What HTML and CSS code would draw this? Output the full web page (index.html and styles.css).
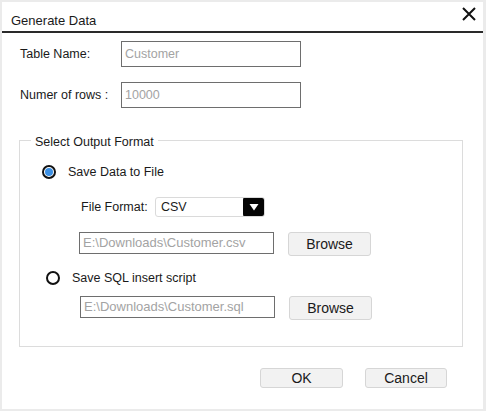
FILE: index.html
```html
<!DOCTYPE html>
<html>
<head>
<meta charset="utf-8">
<link rel="stylesheet" href="styles.css">
</head>
<body>
<div class="dialog">
  <div class="titlebar">
    <span class="title">Generate Data</span>
    <svg class="close" width="14" height="14" viewBox="0 0 14 14"><path d="M1 1 L13 13 M13 1 L1 13" stroke="#111" stroke-width="2" fill="none"/></svg>
  </div>
  <div class="form">
    <div class="row first">
      <span class="label">Table Name:</span>
      <div class="textbox">Customer</div>
    </div>
    <div class="row second">
      <span class="label">Numer of rows :</span>
      <div class="textbox">10000</div>
    </div>
    <div class="group">
      <span class="legend">Select Output Format</span>
      <div class="option opt1">
        <svg class="radio" width="14" height="14" viewBox="0 0 14 14"><circle cx="7" cy="7" r="6" stroke="#111" stroke-width="2" fill="#fff"/><circle cx="7" cy="7" r="4" fill="#3b8fe3"/></svg>
        <span>Save Data to File</span>
      </div>
      <div class="format-row">
        <span class="flabel">File Format:</span>
        <div class="select">
          <span class="select-val">CSV</span>
          <span class="arrow"><svg width="10" height="8" viewBox="0 0 10 8"><path d="M0.5 1 L9.5 1 L5 7.5 Z" fill="#fff"/></svg></span>
        </div>
      </div>
      <div class="path-row p1">
        <div class="pathbox">E:\Downloads\Customer.csv</div>
        <div class="btn browse">Browse</div>
      </div>
      <div class="option opt2">
        <svg class="radio" width="14" height="14" viewBox="0 0 14 14"><circle cx="7" cy="7" r="6" stroke="#111" stroke-width="2" fill="#fff"/></svg>
        <span>Save SQL insert script</span>
      </div>
      <div class="path-row p2">
        <div class="pathbox">E:\Downloads\Customer.sql</div>
        <div class="btn browse">Browse</div>
      </div>
    </div>
    <div class="footer">
      <div class="btn action ok">OK</div>
      <div class="btn action">Cancel</div>
    </div>
  </div>
</div>
</body>
</html>
```
FILE: styles.css
```css
html, body {
  margin: 0;
  padding: 0;
}
body {
  background: #ebebeb;
  font-family: "Liberation Sans", Arial, sans-serif;
  color: #1a1a1a;
  width: 486px;
  height: 411px;
  overflow: hidden;
}
.dialog {
  margin: 2px 3px 2px 2px;
  width: 481px;
  height: 407px;
  background: #fff;
}
.titlebar {
  display: flex;
  justify-content: space-between;
  align-items: flex-start;
  height: 29px;
  border-bottom: 2px solid #2a2a2a;
}
.title {
  font-size: 13px;
  line-height: 15px;
  margin: 11px 0 0 9px;
}
.close {
  margin: 5px 7px 0 0;
}
.row {
  display: flex;
  align-items: center;
  padding-left: 18px;
  font-size: 12.5px;
}
.row.first { margin-top: 8px; }
.row.second { margin-top: 15px; }
.label {
  width: 101px;
}
.textbox {
  box-sizing: border-box;
  width: 180px;
  height: 26px;
  border: 1px solid #6e6e6e;
  padding-left: 3px;
  line-height: 24px;
  color: #a3a3a3;
  font-size: 12.5px;
}
.group {
  position: relative;
  box-sizing: border-box;
  margin: 32px 0 0 17px;
  width: 444px;
  height: 207px;
  border: 1px solid #dcdcdc;
  font-size: 12.5px;
}
.legend {
  position: absolute;
  top: -6px;
  left: 11px;
  padding: 0 4px;
  background: #fff;
  line-height: 15px;
}
.option {
  display: flex;
  align-items: center;
  height: 16px;
  gap: 12px;
}
.opt1 { margin-top: 23px; padding-left: 22px; }
.opt2 { margin-top: 14px; padding-left: 26px; }
.format-row {
  display: flex;
  align-items: center;
  margin-top: 17px;
  padding-left: 61px;
}
.flabel { width: 74px; }
.select {
  box-sizing: border-box;
  display: flex;
  align-items: center;
  justify-content: space-between;
  width: 110px;
  height: 20px;
  border: 1px solid #dadada;
  border-radius: 3px;
  overflow: hidden;
}
.select-val {
  padding-left: 5px;
  font-size: 12.5px;
}
.arrow {
  display: flex;
  align-items: center;
  justify-content: center;
  width: 22px;
  height: 20px;
  background: #050505;
  border-radius: 3px;
  margin-right: -1px;
}
.path-row {
  display: flex;
  align-items: flex-start;
  gap: 14px;
}
.p1 { margin-top: 15px; padding-left: 59px; }
.p2 { margin-top: 10px; padding-left: 60px; }
.pathbox {
  box-sizing: border-box;
  width: 195px;
  height: 22px;
  border: 1px solid #6e6e6e;
  padding-left: 3px;
  line-height: 20px;
  font-size: 13px;
  color: #a3a3a3;
  white-space: nowrap;
  overflow: hidden;
}
.btn {
  box-sizing: border-box;
  display: flex;
  align-items: center;
  justify-content: center;
  background: #f2f2f2;
  border: 1px solid #d6d6d6;
  border-radius: 3px;
  font-size: 14px;
  color: #1a1a1a;
}
.browse {
  width: 83px;
  height: 24px;
}
.footer {
  display: flex;
  justify-content: flex-end;
  gap: 22px;
  margin-top: 21px;
  padding-right: 36px;
}
.action {
  width: 82px;
  height: 20px;
}
.ok {
  width: 83px;
}
```
